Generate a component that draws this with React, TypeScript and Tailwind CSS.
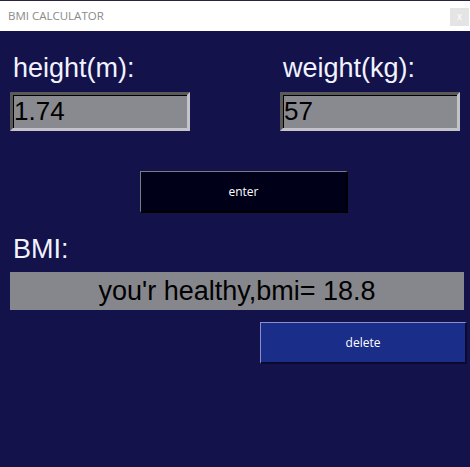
import { useState } from "react";

export default function App() {
  const [height, setHeight] = useState("1.74");
  const [weight, setWeight] = useState("57");
  const [result, setResult] = useState("you'r healthy,bmi= 18.8");

  const calc = () => {
    const h = parseFloat(height);
    const w = parseFloat(weight);
    if (!h || !w) return;
    const bmi = w / (h * h);
    setResult("you'r healthy,bmi= " + bmi.toFixed(1));
  };

  const inputCls =
    "w-[180px] h-[39px] bg-[#898a8f] border-[3px] border-t-[#5a5a5a] border-l-[#5a5a5a] border-b-[#c4c4c8] border-r-[#c4c4c8] shadow-[inset_1px_1px_0_#000] pl-[1px] text-[26px] leading-none text-black outline-none font-['Liberation_Sans',Arial,sans-serif]";

  return (
    <div className="w-[470px] h-[467px] flex flex-col bg-[#13124a] font-['Liberation_Sans',Arial,sans-serif]">
      {/* title bar */}
      <div className="h-[31px] border-t border-[#2b2440] bg-white flex items-center justify-between">
        <span className="pl-[8px] text-[11.5px] text-[#8a8a8a] font-['Open_Sans',sans-serif]">BMI CALCULATOR</span>
        <div className="mr-[1px] mt-[2px] w-[19px] h-[18px] bg-[#e4e4e4] flex items-center justify-center text-[10px] leading-none text-white">
          x
        </div>
      </div>

      <div className="flex flex-col">
        <div className="flex gap-[90px] pl-[10px] pt-[22px]">
          <div className="flex flex-col">
            <label className="pl-[3px] text-[27px] leading-[30px] text-[#f2f2ff]">height(m):</label>
            <input
              className={inputCls + " mt-[9px]"}
              value={height}
              onChange={(e) => setHeight(e.target.value)}
            />
          </div>
          <div className="flex flex-col">
            <label className="pl-[3px] text-[27px] leading-[30px] text-[#f2f2ff]">weight(kg):</label>
            <input
              className={inputCls + " mt-[9px]"}
              value={weight}
              onChange={(e) => setWeight(e.target.value)}
            />
          </div>
        </div>

        <button
          onClick={calc}
          className="ml-[140px] mt-[40px] w-[208px] h-[42px] bg-[#000018] border border-t-[#7a7a8a] border-l-[#7a7a8a] border-b-[#000000] border-r-[#000000] border-b-2 border-r-2 text-white text-[12px] font-['Open_Sans',sans-serif]"
        >
          enter
        </button>

        <div className="pl-[13px] mt-[21px] text-[27px] leading-[30px] text-[#f2f2ff]">BMI:</div>
        <div className="ml-[10px] mt-[8px] w-[454px] h-[38px] bg-[#86878c] flex items-center justify-center text-[27px] leading-none text-black">
          {result}
        </div>

        <div className="flex justify-end pr-[3px] mt-[12px]">
          <button
            onClick={() => {
              setHeight("");
              setWeight("");
              setResult("");
            }}
            className="w-[207px] h-[42px] bg-[#1a2d88] border border-t-[#8c8cd0] border-l-[#8c8cd0] border-b-[#0a0a30] border-r-[#0a0a30] border-b-2 border-r-2 text-white text-[12px] font-['Open_Sans',sans-serif]"
          >
            delete
          </button>
        </div>
      </div>
    </div>
  );
}
